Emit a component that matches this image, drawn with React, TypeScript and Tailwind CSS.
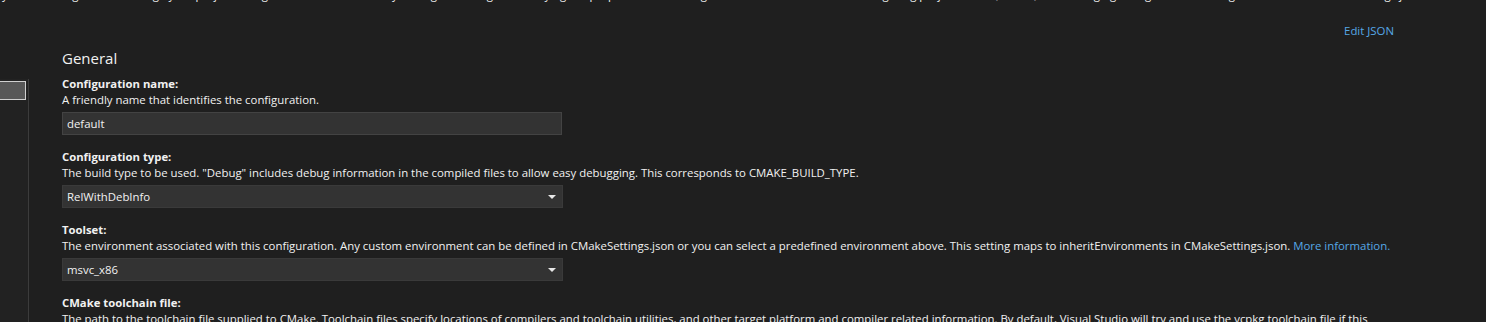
import React from 'react';

const font = { fontFamily: '"Segoe UI", "Open Sans", "Noto Sans", sans-serif' };

type FieldProps = {
  label: string;
  description: React.ReactNode;
  children?: React.ReactNode;
};

const Field: React.FC<FieldProps> = ({ label, description, children }) => (
  <div className="flex flex-col">
    <p className="font-bold text-[11.3px] leading-[16px] text-[#f1f1f1]">{label}</p>
    <p className="text-[11.4px] leading-[16px] text-[#f1f1f1] whitespace-nowrap">{description}</p>
    {children}
  </div>
);

const TextInput: React.FC<{ value: string }> = ({ value }) => (
  <div className="mt-[4px] w-[500px] h-[23px] bg-[#333333] border border-[#434343] px-[4px] flex items-center text-[11.4px] text-[#f1f1f1]">
    {value}
  </div>
);

const Select: React.FC<{ value: string }> = ({ value }) => (
  <div className="mt-[4px] w-[501px] h-[23px] bg-[#333333] border border-[#3a3a3a] pl-[4px] pr-[6px] flex items-center justify-between text-[11.4px] text-[#f1f1f1]">
    <span>{value}</span>
    <svg width="8" height="4" viewBox="0 0 8 4" className="mt-[1px]">
      <path d="M0 0h8L4 4z" fill="#e8e8e8" />
    </svg>
  </div>
);

export default function App() {
  return (
    <div className="w-[1486px] h-[322px] overflow-hidden bg-[#1f1f1f] text-[#f1f1f1]" style={font}>
      <div className="h-[3px] overflow-hidden">
        <p className="-mt-[13.5px] text-[11.4px] leading-[16px] whitespace-nowrap pl-[2px]">
          you can configure and manage your project configurations in this editor by adding, removing, or modifying the properties and settings that Visual Studio uses for configuring project builds (CMake) and managing configurations. Changes are saved to CMakeSettings.json.
        </p>
      </div>
      <div className="flex">
        <div className="w-[29px] shrink-0 pt-[76px]">
          <div className="h-[260px] border-r border-[#3c3c3c] bg-[#222222] pt-[2px]">
            <div className="h-[19px] w-[26px] bg-[#575757] border border-[#cfcfcf] border-l-0" />
          </div>
        </div>
        <div className="flex-1 flex flex-col pl-[33px] pr-[92px]">
          <div className="flex justify-end pt-[20px]">
            <span className="text-[11.4px] leading-[16px] text-[#56a8e6]">Edit JSON</span>
          </div>
          <h2 className="text-[15px] leading-[22px] mt-[8px] text-[#f1f1f1]">General</h2>
          <div className="flex flex-col gap-[14px] mt-[7px]">
            <Field label="Configuration name:" description="A friendly name that identifies the configuration.">
              <TextInput value="default" />
            </Field>
            <Field
              label="Configuration type:"
              description='The build type to be used. "Debug" includes debug information in the compiled files to allow easy debugging. This corresponds to CMAKE_BUILD_TYPE.'
            >
              <Select value="RelWithDebInfo" />
            </Field>
            <Field
              label="Toolset:"
              description={
                <>
                  The environment associated with this configuration. Any custom environment can be defined in CMakeSettings.json or you can select a predefined environment above. This setting maps to inheritEnvironments in CMakeSettings.json.{' '}
                  <span className="text-[#56a8e6]">More information.</span>
                </>
              }
            >
              <Select value="msvc_x86" />
            </Field>
            <Field
              label="CMake toolchain file:"
              description="The path to the toolchain file supplied to CMake. Toolchain files specify locations of compilers and toolchain utilities, and other target platform and compiler related information. By default, Visual Studio will try and use the vcpkg toolchain file if this"
            />
          </div>
        </div>
      </div>
    </div>
  );
}
